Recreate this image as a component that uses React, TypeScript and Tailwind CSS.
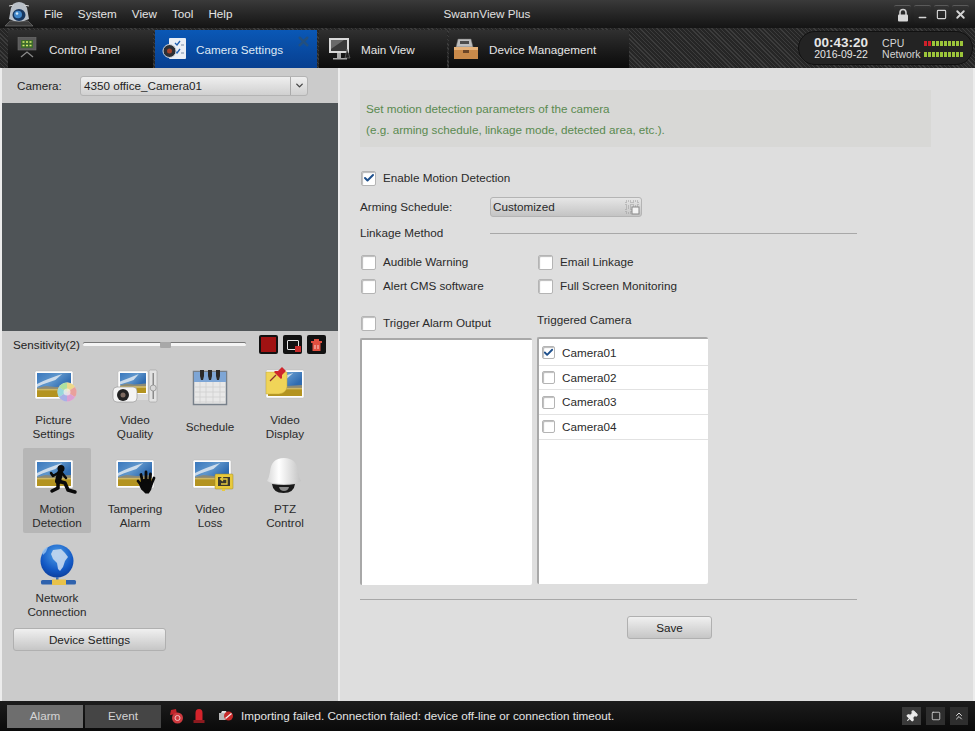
import React from 'react';
import { Check, ChevronDown, Minus, Square, X, ChevronsUp, Pin } from 'lucide-react';

const FONT = "font-['Liberation_Sans',Arial,sans-serif]";

const Photo = ({ x, y, w = 38, h = 28 }: { x: number; y: number; w?: number; h?: number }) => {
  const iw = w - 4;
  const ih = h - 4;
  const horizon = y + 2 + ih * 0.62;
  return (
    <g>
      <defs>
        <linearGradient id="sky" x1="0" y1="0" x2="1" y2="0.5">
          <stop offset="0" stopColor="#3a78bd" />
          <stop offset="0.55" stopColor="#5f96cc" />
          <stop offset="1" stopColor="#2f6bb0" />
        </linearGradient>
      </defs>
      <rect x={x} y={y} width={w} height={h} rx="1.500" fill="#fdfdfd" stroke="#b4b4b4" strokeWidth="0.4" />
      <rect x={x + 2} y={y + 2} width={iw} height={ih * 0.62} fill="url(#sky)" />
      <path d={`M${x + 2} ${horizon - 4}Q${x + iw * 0.35} ${y + 8} ${x + iw * 0.8} ${y + 3}L${x + iw * 0.6} ${y + 9}Q${x + iw * 0.4} ${y + 11} ${x + 2} ${horizon - 1}z`} fill="#e8eef3" opacity="0.8" />
      <path d={`M${x + 2} ${horizon}l${iw * 0.25} -2l${iw * 0.3} 1l${iw * 0.45} -1v3h-${iw}z`} fill="#8b8a78" />
      <rect x={x + 2} y={horizon + 1} width={iw} height={ih * 0.38 - 1} fill="#b39320" />
      <rect x={x + 2} y={horizon + 1} width={iw} height="1.500" fill="#d5c078" opacity="0.8" />
    </g>
  );
};

const PictureSettingsIcon = () => (
  <svg width="60" height="44" viewBox="0 0 60 44">
    <Photo x={8} y={5} />
    <circle cx="40" cy="26" r="9.500" fill="#e9cfd8" />
    <path d="M40 26V16.500a9.500 9.500 0 0 1 8 4.500z" fill="#ecd98a" />
    <path d="M40 26l8-5a9.500 9.500 0 0 1 0 10z" fill="#e9a09c" />
    <path d="M40 26l8 5a9.500 9.500 0 0 1-8 4.500z" fill="#dca0d4" />
    <path d="M40 26v9.500a9.500 9.500 0 0 1-8-4.500z" fill="#a8b0e6" />
    <path d="M40 26l-8 5a9.500 9.500 0 0 1 0-10z" fill="#98d8dc" />
    <path d="M40 26l-8-5a9.500 9.500 0 0 1 8-4.500z" fill="#aee0a0" />
    <circle cx="40" cy="26" r="3.500" fill="#f2eee8" opacity="0.75" />
  </svg>
);

const VideoQualityIcon = () => (
  <svg width="60" height="44" viewBox="0 0 60 44">
    <Photo x={13} y={5} w={30} h={24} />
    <rect x={44} y={4} width="8" height="32" rx="1.500" fill="#e2e2e2" stroke="#a0a0a0" strokeWidth="0.6" />
    <rect x={47.500} y={7} width="1.500" height="26" fill="#8a8a8a" />
    <circle cx="48.200" cy="22" r="3" fill="#d8d8d8" stroke="#868686" strokeWidth="0.7" />
    <rect x={26} y={28} width="17" height="6" fill="#dadada" />
    <rect x={8} y={21} width="24" height="15" rx="4" fill="#f4f4f4" stroke="#8d8d8d" strokeWidth="0.6" />
    <circle cx="18" cy="29" r="6" fill="#222" />
    <circle cx="18" cy="29" r="2.500" fill="#7d6a60" />
  </svg>
);

const ScheduleIcon = () => (
  <svg width="60" height="44" viewBox="0 0 60 44">
    <rect x={13.500} y={5.500} width="33" height="33" fill="#e8e8e8" stroke="#77808a" strokeWidth="1.500" />
    <rect x={14} y={6} width="32" height="10" fill="#7ea6d6" />
    <path d="M14 21h32M14 26h32M14 31h32M14 36h32M20 16v22M26 16v22M33 16v22M40 16v22" stroke="#cfcfcf" strokeWidth="0.8" />
    <path d="M20 4h4v6l-1 4h-2l-1-4zM28 4h4v6l-1 4h-2l-1-4zM36 4h4v6l-1 4h-2l-1-4z" fill="#2a2a2a" />
  </svg>
);

const VideoDisplayIcon = () => (
  <svg width="60" height="44" viewBox="0 0 60 44">
    <Photo x={11} y={4} />
    <path d="M11 6h21v15q-1 6-8 7H11z" fill="#f0d458" stroke="#c2a83a" strokeWidth="0.5" />
    <path d="M15 15l6-6" stroke="#8a3030" strokeWidth="1.200" />
    <path d="M20 5l3 0 4-4 4 4-4 4 0 3-1 1-7-7z" fill="#d0262c" />
  </svg>
);

const MotionIcon = () => (
  <svg width="60" height="44" viewBox="0 0 60 44">
    <Photo x={8} y={5} />
    <circle cx="34" cy="13.500" r="3.500" fill="#0a0a0a" />
    <path d="M33 18l-2 8" fill="none" stroke="#0a0a0a" strokeWidth="6" strokeLinecap="round" />
    <path d="M31 18l-5 3-2-3M35 18l4 5" fill="none" stroke="#0a0a0a" strokeWidth="2.500" strokeLinecap="round" strokeLinejoin="round" />
    <path d="M31 26l7 2 3 7 7 2M31 27v6l-6 3" fill="none" stroke="#0a0a0a" strokeWidth="3.500" strokeLinecap="round" strokeLinejoin="round" />
  </svg>
);

const TamperingIcon = () => (
  <svg width="60" height="44" viewBox="0 0 60 44">
    <Photo x={11} y={5} />
    <circle cx="41" cy="30" r="6.500" fill="#0a0a0a" />
    <path d="M36 30l-3-4M37.500 27l-1.500-7.500M41 26V17M44.500 27l1-8M46.500 29l2.500-6M38 34l3 3h2l2-3" fill="none" stroke="#0a0a0a" strokeWidth="2.800" strokeLinecap="round" />
  </svg>
);

const VideoLossIcon = () => (
  <svg width="60" height="44" viewBox="0 0 60 44">
    <Photo x={13} y={5} />
    <rect x={35} y={19} width="18" height="15" rx="1" fill="#e8c93c" stroke="#9c8a2a" strokeWidth="0.5" />
    <rect x={38} y={22} width="12" height="9" fill="#3a382c" />
    <path d="M41 29h6v-5h-6m2-2l-2.500 2 2.500 2" fill="none" stroke="#e8c93c" strokeWidth="1.300" />
    <rect x={42} y={34} width="3" height="2" fill="#e8c93c" />
  </svg>
);

const PtzIcon = () => (
  <svg width="60" height="44" viewBox="0 0 60 44">
    <defs>
      <linearGradient id="dome" x1="0" y1="0" x2="1" y2="0">
        <stop offset="0" stopColor="#d8d8d8" />
        <stop offset="0.35" stopColor="#ffffff" />
        <stop offset="1" stopColor="#c2c2c2" />
      </linearGradient>
    </defs>
    <path d="M15 17Q16 3 29 3t14 14q1 6 3 9q-4 3-17 3t-17-3q2-3 3-9z" fill="url(#dome)" />
    <path d="M17 29q12 2 23 0q-1 9-11.500 9T17 29z" fill="#1a1a1a" />
    <path d="M24 32h10q-1 4-5 4t-5-4z" fill="#8b8b8b" />
  </svg>
);

const GlobeIcon = () => (
  <svg width="60" height="44" viewBox="0 0 60 44">
    <defs>
      <radialGradient id="globe" cx="0.5" cy="0.3" r="0.75">
        <stop offset="0" stopColor="#4f9fe8" />
        <stop offset="0.65" stopColor="#1258c4" />
        <stop offset="1" stopColor="#0b3a96" />
      </radialGradient>
    </defs>
    <circle cx="30" cy="17" r="16.500" fill="url(#globe)" />
    <path d="M26 6l8-1 4 4 3 4-3 4-2 6-3 4-2-2-1-6-4-4-2-5z" fill="#c5d8ee" opacity="0.9" />
    <path d="M15 8q2-4 6-5l-2 5-3 3z" fill="#9cc6f0" opacity="0.8" />
    <rect x={29} y={33} width="2.500" height="3" fill="#3d6fb5" />
    <rect x={14} y={36} width="35" height="4.500" rx="1.500" fill="#2f62ad" />
    <rect x={25} y={35.500} width="14" height="5.500" fill="#e8c24a" />
  </svg>
);

const LogoIcon = () => (
  <svg width="34" height="28" viewBox="0 0 34 28">
    <path d="M3 26l5-5h18l5 5z" fill="#3c3c3c" stroke="#777" strokeWidth="0.6" />
    <path d="M9 8q2-6 8-6t8 6l2 11q-10 5-20 0z" fill="#b9c0c8" />
    <path d="M7 6l5-1M27 6l-5-1" stroke="#d8d8d8" strokeWidth="1" />
    <ellipse cx="17" cy="15" rx="6.500" ry="6" fill="#16365f" />
    <ellipse cx="16" cy="14.500" rx="4" ry="3.800" fill="#3f86c9" />
    <circle cx="15" cy="13.500" r="1.300" fill="#cfe6f7" />
  </svg>
);

const ControlPanelIcon = () => (
  <svg width="22" height="24" viewBox="0 0 22 24">
    <rect x="2" y="0" width="18" height="13" fill="#5a5a5a" stroke="#6d6d6d" strokeWidth="0.6" />
    <rect x="5" y="3" width="12" height="8" fill="#3c6a2c" />
    <path d="M6.500 5h2M10 5h2M13.500 5h2M6.500 8.500h2M10 8.500h2M13.500 8.500h2" stroke="#d6ee6a" strokeWidth="1.700" />
    <path d="M5 20l6-5 6 5" fill="none" stroke="#8a8a8a" strokeWidth="1.300" />
  </svg>
);

const CameraSettingsIcon = () => (
  <svg width="26" height="24" viewBox="0 0 26 24">
    <rect x="7" y="1" width="17" height="21" rx="1" fill="#e9eef5" />
    <path d="M13 6l2 2 3-4M13 14l2 2 3-4" fill="none" stroke="#1f5fb0" strokeWidth="1.300" />
    <path d="M19 8h3M19 16h3" stroke="#7a8ca6" strokeWidth="1.200" />
    <circle cx="7.500" cy="14" r="6.500" fill="#2b2f35" stroke="#cfd4da" />
    <circle cx="7.500" cy="14" r="2.500" fill="#a4432d" />
  </svg>
);

const MainViewIcon = () => (
  <svg width="24" height="24" viewBox="0 0 24 24">
    <rect x="1" y="1" width="20" height="15" fill="#d9d9d9" />
    <rect x="3" y="3" width="16" height="11" fill="#3a3a3a" />
    <path d="M3 3h13L3 12z" fill="#6a6a6a" />
    <path d="M5 21h14v1.500H5zM9 16h4v5H9z" fill="#a8a8a8" />
    <path d="M19 12l3 9h-5z" fill="#222" stroke="#888" strokeWidth="0.5" />
  </svg>
);

const DeviceIcon = () => (
  <svg width="26" height="24" viewBox="0 0 26 24">
    <path d="M5 2h13l2 8H3z" fill="#bdbdbd" stroke="#666" strokeWidth="0.5" />
    <rect x="7" y="4" width="9" height="3" fill="#4c4c4c" />
    <rect x="1" y="10" width="24" height="12" fill="#c98a4a" />
    <rect x="1" y="10" width="24" height="3" fill="#e6b27a" />
    <rect x="10" y="13" width="6" height="3" fill="#6b4526" />
  </svg>
);

const LockIcon = () => (
  <svg width="12" height="14" viewBox="0 0 12 14">
    <path d="M3 7V4.500a3 3 0 0 1 6 0V7" fill="none" stroke="#cfcfcf" strokeWidth="1.600" />
    <rect x="1" y="6.500" width="10" height="7" rx="1" fill="#d8d8d8" />
  </svg>
);

const AlarmGroupIcon = () => (
  <svg width="16" height="16" viewBox="0 0 16 16">
    <path d="M2 7l1-5 5-1 1 5z" fill="#c0242a" />
    <circle cx="9.500" cy="10" r="5.500" fill="#cf3a3f" />
    <circle cx="9.500" cy="10" r="2.500" fill="none" stroke="#f2c3c3" strokeWidth="1" />
  </svg>
);

const SirenIcon = () => (
  <svg width="12" height="16" viewBox="0 0 12 16">
    <path d="M2.500 12V5q0-4 3.500-4t3.500 4v7z" fill="#d3232b" />
    <rect x="0.500" y="12" width="11" height="3" fill="#8c1a1f" />
  </svg>
);

const ImportFailIcon = () => (
  <svg width="16" height="14" viewBox="0 0 16 14">
    <path d="M1 4h9v7H1z" fill="#b8b8b8" />
    <path d="M3 4l1-2h4l1 2z" fill="#e0e0e0" />
    <circle cx="10.500" cy="7" r="4.500" fill="#c62a2a" />
    <path d="M7.500 9.500l6-5" stroke="#f4f4f4" strokeWidth="1.300" />
  </svg>
);

const Tab = ({ icon, label, active, className }: { icon: React.ReactNode; label: string; active?: boolean; className: string }) => (
  <div
    className={`relative flex h-[38px] items-center self-end ${className} ${
      active ? 'bg-gradient-to-b from-[#0a58b6] to-[#073f90]' : 'bg-gradient-to-b from-[#303030] to-[#0b0b0b]'
    }`}
  >
    {icon}
    <span className={`pt-[2px] ${active ? 'text-[#dfe9f5]' : 'text-[#e6e6e6]'}`}>{label}</span>
    {active && <X size={15} strokeWidth={4} className="absolute right-[6px] top-[4px] text-[#23507f]" />}
  </div>
);

const WinBtn = ({ children, className = 'w-[17px]' }: { children: React.ReactNode; className?: string }) => (
  <div className={`flex h-[18px] items-center justify-center rounded-[2px] border-t border-[#5a5a5a] bg-gradient-to-b from-[#333] to-[#1c1c1c] text-[#d4d4d4] ${className}`}>
    {children}
  </div>
);

const Leds = ({ red = 0 }: { red?: number }) => (
  <div className="flex h-[5px] gap-px">
    {Array.from({ length: 10 }).map((_, i) => (
      <div key={i} className={`w-[3px] ${i < red ? 'bg-[#d0202a]' : 'bg-[#9cc53a]'}`} />
    ))}
  </div>
);

const Tile = ({ icon, lines, active, labelClass = '' }: { icon: React.ReactNode; lines: string[]; active?: boolean; labelClass?: string }) => (
  <div className={`flex h-[85px] flex-col items-center rounded-[2px] pt-[7px] ${active ? 'bg-[#b6b6b6]' : ''}`}>
    {icon}
    <div className={`mt-[3px] flex h-[28px] flex-col items-center justify-center whitespace-nowrap leading-[14px] text-[#2a2a2a] ${labelClass}`}>
      {lines.map(l => (
        <span key={l}>{l}</span>
      ))}
    </div>
  </div>
);

const Checkbox = ({ checked, small }: { checked?: boolean; small?: boolean }) => (
  <div
    className={`flex shrink-0 items-center justify-center rounded-[2px] border border-[#b4b4b4] bg-white shadow-[inset_1px_1px_1px_#bbb] ${
      small ? 'h-[13px] w-[13px]' : 'h-[15px] w-[15px]'
    }`}
  >
    {checked && <Check size={small ? 11 : 12} strokeWidth={4} className="text-[#1d4f8c]" />}
  </div>
);

const CheckRow = ({ label, checked, className = '' }: { label: string; checked?: boolean; className?: string }) => (
  <div className={`flex items-center gap-[7px] text-[#2a2a2a] ${className}`}>
    <Checkbox checked={checked} />
    <span>{label}</span>
  </div>
);

const GreyButton = ({ label, className }: { label: string; className: string }) => (
  <div className={`flex items-center justify-center rounded-[3px] border border-[#b0b0b0] bg-gradient-to-b from-[#f0f0f0] to-[#c6c6c6] text-[#222] ${className}`}>
    {label}
  </div>
);

export default function App() {
  return (
    <div className={`flex h-[731px] w-[975px] flex-col overflow-hidden bg-[#111] text-[11.700px] leading-[16px] ${FONT}`}>
      {/* title bar */}
      <div className="flex h-[28px] shrink-0 items-center bg-gradient-to-b from-[#3a3a3a] to-[#141414]">
        <div className="flex flex-1 items-center">
          <div className="ml-[2px] w-[34px]">
            <LogoIcon />
          </div>
          <div className="ml-[8px] flex gap-[15px] text-[#e4e4e4]">
            <span>File</span>
            <span>System</span>
            <span>View</span>
            <span>Tool</span>
            <span>Help</span>
          </div>
        </div>
        <span className="pl-[5px] text-[#e0e0e0]">SwannView Plus</span>
        <div className="flex flex-1 items-center justify-end gap-[3px] pr-[6px]">
          <WinBtn><LockIcon /></WinBtn>
          <WinBtn><Minus size={11} strokeWidth={3} className="translate-y-[3px]" /></WinBtn>
          <WinBtn className="w-[15px]"><Square size={11} strokeWidth={2.500} /></WinBtn>
          <WinBtn><X size={13} strokeWidth={3.500} /></WinBtn>
        </div>
      </div>

      {/* tab bar */}
      <div className="flex h-[40px] shrink-0 items-center gap-[2px] bg-[repeating-linear-gradient(45deg,#3c3c3c_0,#3c3c3c_1px,#262626_1px,#262626_3px)] pl-[8px] pr-[2px]">
        <Tab className="w-[145px] pl-[8px]" icon={<div className="mr-[11px]"><ControlPanelIcon /></div>} label="Control Panel" />
        <Tab className="w-[162px] pl-[7px]" active icon={<div className="mr-[8px]"><CameraSettingsIcon /></div>} label="Camera Settings" />
        <Tab className="w-[128px] pl-[9px]" icon={<div className="mr-[9px]"><MainViewIcon /></div>} label="Main View" />
        <Tab className="w-[180px] pl-[4px]" icon={<div className="mr-[10px]"><DeviceIcon /></div>} label="Device Management" />
        <div className="ml-auto flex h-[34px] w-[175px] items-center rounded-[17px] border border-[#111] bg-[#232323] pl-[15px]">
          <div className="flex flex-col items-center pt-px text-[#e6e6e6]">
            <span className="text-[13.500px] font-bold leading-[12px]">00:43:20</span>
            <span className="text-[10.500px] leading-[11px]">2016-09-22</span>
          </div>
          <div className="ml-[14px] flex flex-col pt-px text-[10.500px] leading-[11px] text-[#d5d5d5]">
            <span>CPU</span>
            <span>Network</span>
          </div>
          <div className="ml-[3px] flex flex-col gap-[6px] pt-px">
            <Leds red={2} />
            <Leds />
          </div>
        </div>
      </div>

      {/* main */}
      <div className="flex h-[633px] shrink-0 gap-[2px] bg-[#ececec] pl-[2px] pr-[2px]">
        <div className="flex w-[336px] flex-col bg-[#cbcbcb]">
          <div className="flex h-[35px] shrink-0 items-center pl-[15px]">
            <span className="w-[63px] text-[#222]">Camera:</span>
            <div className="flex h-[20px] w-[228px] items-center rounded-[3px] border border-[#b4b4b4] bg-gradient-to-b from-[#efefef] to-[#d0d0d0]">
              <span className="flex-1 pl-[3px] text-[#222]">4350 office_Camera01</span>
              <div className="flex h-full w-[17px] items-center justify-center border-l border-[#aaa]">
                <ChevronDown size={11} strokeWidth={3} className="text-[#444]" />
              </div>
            </div>
          </div>
          <div className="h-[228px] shrink-0 bg-[#4f5457]" />
          <div className="flex h-[28px] shrink-0 items-center pb-px pl-[11px]">
            <span className="w-[70px] text-[#222]">Sensitivity(2)</span>
            <div className="flex h-[3px] w-[163px] items-center rounded-full bg-[#f4f4f4] shadow-[0_-1px_0_#777]">
              <div className="ml-[77px] h-[6px] w-[11px] rounded-[1px] bg-[#a8a8a8]" />
            </div>
            <div className="ml-[13px] flex gap-[5px]">
              <div className="flex h-[19px] w-[19px] items-center justify-center rounded-[2px] bg-[#111]">
                <div className="h-[15px] w-[15px] bg-[#a01212]" />
              </div>
              <div className="flex h-[19px] w-[19px] items-center justify-center rounded-[2px] bg-[#111]">
                <div className="relative h-[10px] w-[12px] rounded-[1px] border-[1.500px] border-[#e4e4e4]">
                  <div className="absolute -bottom-[3px] -right-[3px] h-[6px] w-[6px] bg-[#c62a2a]" />
                </div>
              </div>
              <div className="flex h-[19px] w-[19px] items-center justify-center rounded-[2px] bg-[#111]">
                <svg width="13" height="14" viewBox="0 0 13 14">
                  <path d="M1 3h11v2H1zM4 1h5v2H4zM2.500 5h8v8h-8z" fill="#e05040" />
                  <path d="M5 7v4M8 7v4" stroke="#f8d0c8" />
                </svg>
              </div>
            </div>
          </div>

          <div className="ml-[21px] grid grid-cols-[68px_88px_62px_88px] gap-y-[4px]">
            <Tile icon={<PictureSettingsIcon />} lines={['Picture', 'Settings']} labelClass="pr-[7px]" />
            <Tile icon={<VideoQualityIcon />} lines={['Video', 'Quality']} />
            <Tile icon={<ScheduleIcon />} lines={['Schedule']} />
            <Tile icon={<VideoDisplayIcon />} lines={['Video', 'Display']} />
            <Tile active icon={<MotionIcon />} lines={['Motion', 'Detection']} />
            <Tile icon={<TamperingIcon />} lines={['Tampering', 'Alarm']} />
            <Tile icon={<VideoLossIcon />} lines={['Video', 'Loss']} />
            <Tile icon={<PtzIcon />} lines={['PTZ', 'Control']} />
            <Tile icon={<GlobeIcon />} lines={['Network', 'Connection']} />
          </div>
          <GreyButton label="Device Settings" className="ml-[11px] mt-[6px] h-[23px] w-[153px]" />
        </div>

        <div className="flex-1 bg-[#dedede] pl-[20px] pt-[22px]">
          <div className="h-[57px] w-[571px] bg-[#d8d8d6] pl-[6px] pt-[8px] leading-[21px] text-[#5a8a50]">
            <div>Set motion detection parameters of the camera</div>
            <div>(e.g. arming schedule, linkage mode, detected area, etc.).</div>
          </div>

          <CheckRow label="Enable Motion Detection" checked className="mt-[23px] pl-px" />

          <div className="mt-[11px] flex h-[20px] items-center text-[#2a2a2a]">
            <span className="w-[130px]">Arming Schedule:</span>
            <div className="flex h-[20px] w-[152px] items-center rounded-[3px] border border-[#b4b4b4] bg-gradient-to-b from-[#e6e6e6] to-[#c4c4c4]">
              <span className="flex-1 pl-[2px]">Customized</span>
              <svg width="16" height="16" viewBox="0 0 16 16" className="mr-px">
                <path d="M2 2h5v5H2zM9 2h5v5H9zM2 9h5v5H2z" fill="none" stroke="#9a9a9a" strokeDasharray="1 1" />
                <rect x="8" y="8" width="7" height="7" fill="#f4f4f4" stroke="#888" />
              </svg>
            </div>
          </div>

          <div className="mt-[9px] flex h-[14px] items-center text-[#2a2a2a]">
            <span className="w-[130px]">Linkage Method</span>
            <div className="h-px w-[367px] bg-[#a8a8a8]" />
          </div>

          <div className="mt-[14px] grid w-[360px] grid-cols-[177px_auto] gap-y-[8px] pl-px">
            <CheckRow label="Audible Warning" />
            <CheckRow label="Email Linkage" />
            <CheckRow label="Alert CMS software" />
            <CheckRow label="Full Screen Monitoring" />
          </div>

          <div className="mt-[7px] flex gap-[5px]">
            <div className="flex w-[172px] flex-col">
              <CheckRow label="Trigger Alarm Output" className="mt-[14px] pl-px" />
              <div className="mt-[7px] h-[247px] rounded-[2px] border-l-2 border-t-2 border-[#a8a8a8] bg-white" />
            </div>
            <div className="flex w-[171px] flex-col">
              <div className="mt-[12px] h-[14px] leading-[14px] text-[#2a2a2a]">Triggered Camera</div>
              <div className="mt-[10px] h-[247px] rounded-[2px] border-l-2 border-t-2 border-[#a8a8a8] bg-white pt-[2px]">
                {['Camera01', 'Camera02', 'Camera03', 'Camera04'].map((c, i) => (
                  <div key={c} className="flex h-[24.700px] items-center gap-[7px] border-b border-[#e2e2e2] pl-[3px] text-[#2a2a2a]">
                    <Checkbox small checked={i === 0} />
                    <span>{c}</span>
                  </div>
                ))}
              </div>
            </div>
          </div>

          <div className="mt-[14px] h-px w-[497px] bg-[#a8a8a8]" />
          <GreyButton label="Save" className="ml-[267px] mt-[16px] h-[23px] w-[85px]" />
        </div>
      </div>

      {/* status bar */}
      <div className="flex h-[30px] shrink-0 items-center bg-gradient-to-b from-[#1c1c1c] to-[#0a0a0a] pl-[7px] pr-[7px]">
        <div className="flex h-[23px] w-[76px] items-center justify-center bg-[#6e6e6e] text-[#d4d4d4]">Alarm</div>
        <div className="ml-[2px] flex h-[23px] w-[76px] items-center justify-center bg-[#454545] text-[#d4d4d4]">Event</div>
        <div className="ml-[7px] flex items-center gap-[9px]">
          <AlarmGroupIcon />
          <SirenIcon />
          <div className="ml-[4px]"><ImportFailIcon /></div>
        </div>
        <span className="ml-[7px] text-[#e4e4e4]">Importing failed. Connection failed: device off-line or connection timeout.</span>
        <div className="ml-auto flex items-center gap-[5px]">
          <div className="flex h-[18px] w-[19px] items-center justify-center bg-[#3a3a3a] text-[#ececec]">
            <Pin size={13} fill="currentColor" className="rotate-45" />
          </div>
          <div className="flex h-[18px] w-[19px] items-center justify-center bg-[#2e2e2e] text-[#d8d8d8]">
            <Square size={10} strokeWidth={2} />
          </div>
          <div className="flex h-[18px] w-[18px] items-center justify-center bg-[#2e2e2e] text-[#d8d8d8]">
            <ChevronsUp size={12} strokeWidth={2} />
          </div>
        </div>
      </div>
    </div>
  );
}
